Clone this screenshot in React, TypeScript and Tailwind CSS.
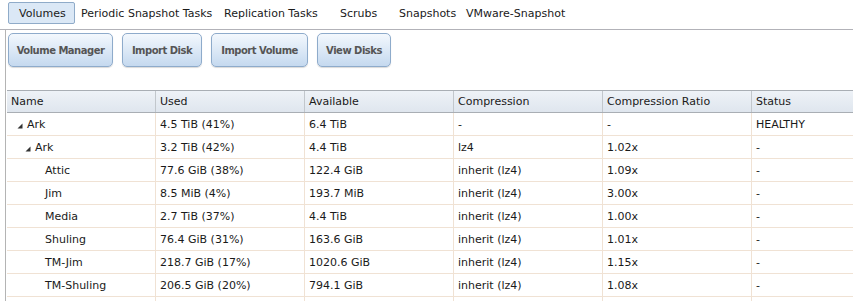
import React from "react";

type Row = { name: string; level: number; used: string; avail: string; comp: string; ratio: string; status: string };

const rows: Row[] = [
  { name: "Ark", level: 0, used: "4.5 TiB (41%)", avail: "6.4 TiB", comp: "-", ratio: "-", status: "HEALTHY" },
  { name: "Ark", level: 1, used: "3.2 TiB (42%)", avail: "4.4 TiB", comp: "lz4", ratio: "1.02x", status: "-" },
  { name: "Attic", level: 2, used: "77.6 GiB (38%)", avail: "122.4 GiB", comp: "inherit (lz4)", ratio: "1.09x", status: "-" },
  { name: "Jim", level: 2, used: "8.5 MiB (4%)", avail: "193.7 MiB", comp: "inherit (lz4)", ratio: "3.00x", status: "-" },
  { name: "Media", level: 2, used: "2.7 TiB (37%)", avail: "4.4 TiB", comp: "inherit (lz4)", ratio: "1.00x", status: "-" },
  { name: "Shuling", level: 2, used: "76.4 GiB (31%)", avail: "163.6 GiB", comp: "inherit (lz4)", ratio: "1.01x", status: "-" },
  { name: "TM-Jim", level: 2, used: "218.7 GiB (17%)", avail: "1020.6 GiB", comp: "inherit (lz4)", ratio: "1.15x", status: "-" },
  { name: "TM-Shuling", level: 2, used: "206.5 GiB (20%)", avail: "794.1 GiB", comp: "inherit (lz4)", ratio: "1.08x", status: "-" },
  { name: "", level: 2, used: "", avail: "", comp: "", ratio: "", status: "" },
];

const Tri = () => (
  <svg width="6" height="6" viewBox="0 0 6 6" className="mr-[4px] shrink-0">
    <polygon points="5.5,0.5 5.5,5.5 0.5,5.5" fill="#333" />
  </svg>
);

const headers = ["Name", "Used", "Available", "Compression", "Compression Ratio", "Status"];

export default function App() {
  return (
    <div className="w-[853px] h-[301px] overflow-hidden bg-white text-[11px] text-[#1a1a1a] font-['DejaVu_Sans',sans-serif]">
      {/* tabs */}
      <div className="h-[30px] border-b border-[#b2b2b8] flex items-start pt-[2px] pl-[8px]">
        <div className="w-[67px] h-[22px] border border-[#8fabc9] bg-[#dbe8f6] rounded-[2px] flex items-center pl-[10px] pt-[2px]">Volumes</div>
        <div className="w-[143px] h-[22px] flex items-center pl-[6px] pt-[3px]">Periodic Snapshot Tasks</div>
        <div className="w-[116px] h-[22px] flex items-center pl-[6px] pt-[3px]">Replication Tasks</div>
        <div className="w-[59px] h-[22px] flex items-center pl-[6px] pt-[3px]">Scrubs</div>
        <div className="w-[67px] h-[22px] flex items-center pl-[6px] pt-[3px]">Snapshots</div>
        <div className="h-[22px] flex items-center pl-[6px] pt-[3px] whitespace-nowrap">VMware-Snapshot</div>
      </div>
      {/* body */}
      <div className="ml-[5px] border-l border-[#b4b4b4] pl-[1px] h-[271px]">
        <div className="flex gap-[9px] pt-[3px] pl-[1px]">
          {[
            ["Volume Manager", "w-[105px]"],
            ["Import Disk", "w-[80px]"],
            ["Import Volume", "w-[97px]"],
            ["View Disks", "w-[74px]"],
          ].map(([t, w]) => (
            <div
              key={t}
              className={`${w} h-[34px] rounded-[5px] border border-[#8eabcb] bg-gradient-to-b from-[#f3f8fd] to-[#c5d9ef] shadow-[0_1px_1px_rgba(0,0,0,0.15)] flex items-center justify-center font-bold text-[10px] tracking-[-0.5px] whitespace-nowrap text-[#555] pt-[1px]`}
            >
              {t}
            </div>
          ))}
        </div>
        <div className="mt-[23px]">
          <div className="grid grid-cols-[149px_149px_149px_149px_149px_1fr] h-[23px] border-t border-b border-[#a9aeb4] bg-gradient-to-b from-[#eef2f7] to-[#dfe6ee]">
            {headers.map((h, i) => (
              <div key={h} className={`flex items-center pl-[4px] pt-[2px] ${i < 5 ? "border-r border-[#c2c7cc]" : ""}`}>
                {h}
              </div>
            ))}
          </div>
          {rows.map((r, idx) => (
            <div key={idx} className="grid grid-cols-[149px_149px_149px_149px_149px_1fr] h-[23px] border-b border-[#f0e2d4]">
              <div
                className={`flex items-center pt-[3px] border-r border-[#f0e2d4] ${
                  r.level === 0 ? "pl-[10px]" : r.level === 1 ? "pl-[18px]" : "pl-[38px]"
                }`}
              >
                {r.level < 2 && <Tri />}
                {r.name}
              </div>
              <div className="flex items-center pt-[3px] pl-[4px] border-r border-[#f0e2d4]">{r.used}</div>
              <div className="flex items-center pt-[3px] pl-[4px] border-r border-[#f0e2d4]">{r.avail}</div>
              <div className="flex items-center pt-[3px] pl-[4px] border-r border-[#f0e2d4]">{r.comp}</div>
              <div className="flex items-center pt-[3px] pl-[4px] border-r border-[#f0e2d4]">{r.ratio}</div>
              <div className="flex items-center pt-[3px] pl-[4px]">{r.status}</div>
            </div>
          ))}
        </div>
      </div>
    </div>
  );
}
